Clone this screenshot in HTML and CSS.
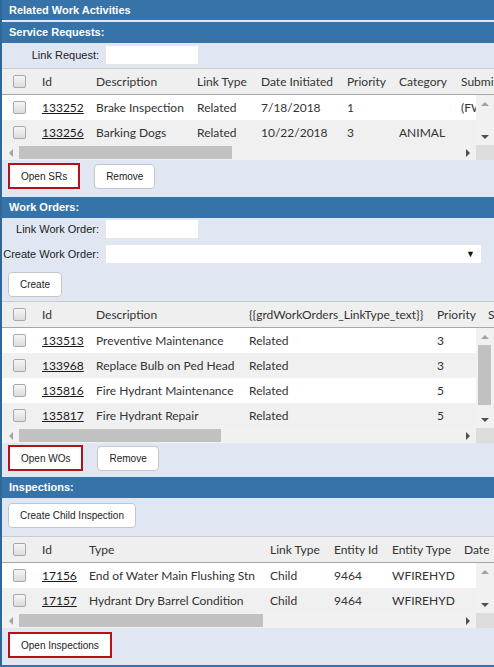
FILE: index.html
```html
<!DOCTYPE html>
<html lang="en">
<head>
<meta charset="UTF-8">
<title>Related Work Activities</title>
<link rel="stylesheet" href="styles.css">
</head>
<body>

<div class="panel">
    <div class="panel-title">Related Work Activities</div>

    <!-- service requests -->
    <div class="section-title">Service Requests:</div>
    <div class="form-row first">
        <label>Link Request:</label>
        <div class="txt"></div>
    </div>
    <div class="grid grid-sr">
        <div class="grid-head">
            <div class="row">
                <div class="c c-chk"><span class="chk"></span></div>
                <div class="c">Id</div>
                <div class="c">Description</div>
                <div class="c">Link Type</div>
                <div class="c">Date Initiated</div>
                <div class="c">Priority</div>
                <div class="c">Category</div>
                <div class="c">Submitted To</div>
            </div>
        </div>
        <div class="grid-body">
            <div class="rows">
                <div class="row">
                    <div class="c c-chk"><span class="chk"></span></div>
                    <div class="c"><a href="#">133252</a></div>
                    <div class="c">Brake Inspection</div>
                    <div class="c">Related</div>
                    <div class="c">7/18/2018</div>
                    <div class="c">1</div>
                    <div class="c"></div>
                    <div class="c">(FW)</div>
                </div>
                <div class="row">
                    <div class="c c-chk"><span class="chk"></span></div>
                    <div class="c"><a href="#">133256</a></div>
                    <div class="c">Barking Dogs</div>
                    <div class="c">Related</div>
                    <div class="c">10/22/2018</div>
                    <div class="c">3</div>
                    <div class="c">ANIMAL</div>
                    <div class="c"></div>
                </div>
            </div>
            <div class="vscroll">
                <div class="arr"><span class="tri up off"></span></div>
                <div class="vtrack"></div>
                <div class="arr"><span class="tri down"></span></div>
            </div>
        </div>
        <div class="hscroll">
            <div class="arr-h"><span class="tri left off"></span></div>
            <div class="htrack"><div class="hthumb"></div></div>
            <div class="arr-h"><span class="tri right"></span></div>
            <div class="corner"></div>
        </div>
    </div>
    <div class="actions actions-sr">
        <button class="btn hl">Open SRs</button>
        <button class="btn">Remove</button>
    </div>

    <!-- work orders -->
    <div class="section-title">Work Orders:</div>
    <div class="form-row">
        <label>Link Work Order:</label>
        <div class="txt"></div>
    </div>
    <div class="form-row second">
        <label>Create Work Order:</label>
        <div class="select"><span class="caret">&#9660;</span></div>
    </div>
    <div class="tools tools-wo">
        <button class="btn">Create</button>
    </div>
    <div class="grid grid-wo">
        <div class="grid-head">
            <div class="row">
                <div class="c c-chk"><span class="chk"></span></div>
                <div class="c">Id</div>
                <div class="c">Description</div>
                <div class="c">{{grdWorkOrders_LinkType_text}}</div>
                <div class="c">Priority</div>
                <div class="c">Status</div>
            </div>
        </div>
        <div class="grid-body">
            <div class="rows">
                <div class="row">
                    <div class="c c-chk"><span class="chk"></span></div>
                    <div class="c"><a href="#">133513</a></div>
                    <div class="c">Preventive Maintenance</div>
                    <div class="c">Related</div>
                    <div class="c">3</div>
                    <div class="c"></div>
                </div>
                <div class="row">
                    <div class="c c-chk"><span class="chk"></span></div>
                    <div class="c"><a href="#">133968</a></div>
                    <div class="c">Replace Bulb on Ped Head</div>
                    <div class="c">Related</div>
                    <div class="c">3</div>
                    <div class="c"></div>
                </div>
                <div class="row">
                    <div class="c c-chk"><span class="chk"></span></div>
                    <div class="c"><a href="#">135816</a></div>
                    <div class="c">Fire Hydrant Maintenance</div>
                    <div class="c">Related</div>
                    <div class="c">5</div>
                    <div class="c"></div>
                </div>
                <div class="row">
                    <div class="c c-chk"><span class="chk"></span></div>
                    <div class="c"><a href="#">135817</a></div>
                    <div class="c">Fire Hydrant Repair</div>
                    <div class="c">Related</div>
                    <div class="c">5</div>
                    <div class="c"></div>
                </div>
            </div>
            <div class="vscroll">
                <div class="arr"><span class="tri up off"></span></div>
                <div class="vtrack"><div class="vthumb"></div></div>
                <div class="arr"><span class="tri down"></span></div>
            </div>
        </div>
        <div class="hscroll">
            <div class="arr-h"><span class="tri left off"></span></div>
            <div class="htrack"><div class="hthumb"></div></div>
            <div class="arr-h"><span class="tri right"></span></div>
            <div class="corner"></div>
        </div>
    </div>
    <div class="actions actions-wo">
        <button class="btn hl">Open WOs</button>
        <button class="btn">Remove</button>
    </div>

    <!-- inspections -->
    <div class="section-title">Inspections:</div>
    <div class="tools tools-insp">
        <button class="btn">Create Child Inspection</button>
    </div>
    <div class="grid grid-insp">
        <div class="grid-head">
            <div class="row">
                <div class="c c-chk"><span class="chk"></span></div>
                <div class="c">Id</div>
                <div class="c">Type</div>
                <div class="c">Link Type</div>
                <div class="c">Entity Id</div>
                <div class="c">Entity Type</div>
                <div class="c">Date</div>
            </div>
        </div>
        <div class="grid-body">
            <div class="rows">
                <div class="row">
                    <div class="c c-chk"><span class="chk"></span></div>
                    <div class="c"><a href="#">17156</a></div>
                    <div class="c">End of Water Main Flushing Stn</div>
                    <div class="c">Child</div>
                    <div class="c">9464</div>
                    <div class="c">WFIREHYD</div>
                    <div class="c"></div>
                </div>
                <div class="row">
                    <div class="c c-chk"><span class="chk"></span></div>
                    <div class="c"><a href="#">17157</a></div>
                    <div class="c">Hydrant Dry Barrel Condition</div>
                    <div class="c">Child</div>
                    <div class="c">9464</div>
                    <div class="c">WFIREHYD</div>
                    <div class="c"></div>
                </div>
            </div>
            <div class="vscroll">
                <div class="arr"><span class="tri up off"></span></div>
                <div class="vtrack"></div>
                <div class="arr"><span class="tri down"></span></div>
            </div>
        </div>
        <div class="hscroll">
            <div class="arr-h"><span class="tri left off"></span></div>
            <div class="htrack"><div class="hthumb"></div></div>
            <div class="arr-h"><span class="tri right"></span></div>
            <div class="corner"></div>
        </div>
    </div>
    <div class="actions actions-insp">
        <button class="btn hl">Open Inspections</button>
    </div>
</div>

</body>
</html>
```

FILE: styles.css
```css
body {
    margin: 0;
    background: #fff;
    font-family: "Liberation Sans", Arial, sans-serif;
    overflow: hidden;
}
.panel {
    width: 492px;
    border-left: 2px solid #2f6797;
    border-bottom: 2px solid #3673a9;
    background: #e0e7f3;
}
.panel-title,
.section-title {
    background: #3673a9;
    color: #fff;
    font-weight: bold;
    font-size: 11px;
    padding-left: 7px;
}
.panel-title {
    height: 20px;
    line-height: 20px;
    margin-bottom: 2px;
}
.section-title {
    height: 21px;
    line-height: 21px;
}

/* forms */
.form-row {
    display: flex;
    align-items: center;
    margin-top: 1px;
}
.form-row.first {
    margin-top: 2px;
    margin-bottom: 3px;
}
.form-row.second {
    margin-top: 5px;
}
.form-row label {
    width: 97px;
    margin-right: 6px;
    text-align: right;
    font-size: 11px;
    color: #222;
}
.txt {
    width: 94px;
    height: 20px;
    box-sizing: border-box;
    border: 1px solid #e6e6e6;
    background: #fff;
}
.select {
    width: 377px;
    height: 20px;
    box-sizing: border-box;
    border: 1px solid #e6e6e6;
    background: #fff;
    display: flex;
    justify-content: flex-end;
    align-items: center;
    padding-right: 6px;
}
.caret {
    font-size: 9px;
    color: #111;
}

/* buttons */
.btn {
    height: 25px;
    padding: 0 11px;
    box-sizing: border-box;
    border: 1px solid #c6c6c6;
    border-radius: 4px;
    background: #fff;
    font-family: "Liberation Sans", Arial, sans-serif;
    font-size: 10px;
    color: #222;
}
.btn.hl {
    height: 26px;
    border: 2px solid #b3121a;
    border-radius: 0;
}
.tools {
    padding: 0 6px;
}
.tools-wo {
    padding-top: 8px;
    padding-bottom: 4px;
}
.tools-insp {
    padding-top: 5px;
    padding-bottom: 8px;
}
.actions {
    display: flex;
    align-items: center;
    gap: 14px;
    padding: 0 6px;
}
.actions-sr {
    padding-top: 3px;
    padding-bottom: 8px;
}
.actions-wo {
    padding-top: 2px;
    padding-bottom: 6px;
}
.actions-insp {
    padding-top: 4px;
    padding-bottom: 7px;
}

/* grids */
.grid {
    background: #fff;
    font-family: Lato, "Noto Sans", sans-serif;
    font-size: 12px;
    color: #333;
}
.grid-head {
    background: #efefef;
    border-top: 1px solid #cbcbcb;
    border-bottom: 1px solid #a6a6a6;
    overflow: hidden;
}
.row {
    display: grid;
    height: 25px;
    line-height: 25px;
    white-space: nowrap;
}
.grid-sr .row {
    grid-template-columns: 33px 54px 101px 64px 86px 52px 62px 120px;
}
.grid-wo .row {
    grid-template-columns: 33px 54px 153px 188px 51px 80px;
}
.grid-insp .row {
    grid-template-columns: 33px 47px 181px 64px 58px 72px 80px;
}
.c {
    padding-left: 7px;
    overflow: hidden;
}
.c-chk {
    padding-left: 11px;
    display: flex;
    align-items: center;
}
.c a {
    color: #1a1a1a;
    text-decoration: underline;
}
.chk {
    width: 11px;
    height: 11px;
    border: 1px solid #a9a9a9;
    border-radius: 2px;
    background: linear-gradient(#f6f6f6, #dcdcdc);
}
.grid-body {
    display: flex;
}
.rows {
    flex: 1;
    overflow: hidden;
}
.rows .row:nth-child(even) {
    background: #f0f0f0;
}

/* scrollbars */
.vscroll {
    width: 18px;
    background: #f1f1f1;
    display: flex;
    flex-direction: column;
}
.arr {
    height: 17px;
    display: flex;
    justify-content: center;
    align-items: center;
}
.vtrack {
    flex: 1;
}
.vthumb {
    height: 60px;
    margin: 0 3px 0 2px;
    background: #c1c1c1;
}
.hscroll {
    display: flex;
    height: 15px;
    background: #f1f1f1;
}
.arr-h {
    width: 17px;
    display: flex;
    justify-content: center;
    align-items: center;
}
.htrack {
    flex: 1;
}
.hthumb {
    height: 13px;
    margin-top: 1px;
    background: #c1c1c1;
}
.grid-sr .hthumb { width: 213px; }
.grid-wo .hthumb { width: 202px; }
.grid-insp .hthumb { width: 244px; }
.corner {
    width: 18px;
    background: #dcdcdc;
}
.tri {
    width: 0;
    height: 0;
    border: 4px solid transparent;
}
.tri.up { border-bottom-color: #505050; border-top-width: 0; }
.tri.down { border-top-color: #505050; border-bottom-width: 0; }
.tri.left { border-right-color: #505050; border-left-width: 0; }
.tri.right { border-left-color: #505050; border-right-width: 0; }
.tri.up.off { border-bottom-color: #a3a3a3; }
.tri.left.off { border-right-color: #a3a3a3; }
```
